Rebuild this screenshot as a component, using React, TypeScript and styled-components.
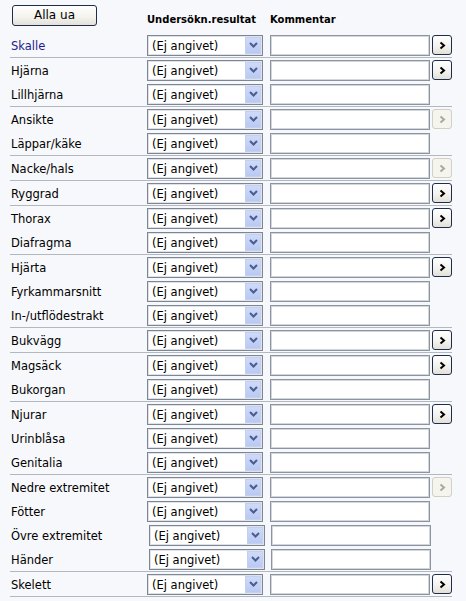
import React from 'react';
import styled, { createGlobalStyle } from 'styled-components';

type Row = {
  label: string;
  go?: 'on' | 'off';
  sep?: boolean;
  shift?: boolean;
  active?: boolean;
};

const rows: Row[] = [
  { label: 'Skalle', go: 'on', sep: true, active: true },
  { label: 'Hjärna', go: 'on' },
  { label: 'Lillhjärna', sep: true },
  { label: 'Ansikte', go: 'off' },
  { label: 'Läppar/käke', sep: true },
  { label: 'Nacke/hals', go: 'off', sep: true },
  { label: 'Ryggrad', go: 'on', sep: true },
  { label: 'Thorax', go: 'on' },
  { label: 'Diafragma', sep: true },
  { label: 'Hjärta', go: 'on' },
  { label: 'Fyrkammarsnitt' },
  { label: 'In-/utflödestrakt', sep: true },
  { label: 'Bukvägg', go: 'on', sep: true },
  { label: 'Magsäck', go: 'on' },
  { label: 'Bukorgan', sep: true },
  { label: 'Njurar', go: 'on' },
  { label: 'Urinblåsa' },
  { label: 'Genitalia', sep: true },
  { label: 'Nedre extremitet', go: 'off' },
  { label: 'Fötter' },
  { label: 'Övre extremitet', shift: true },
  { label: 'Händer', shift: true, sep: true },
  { label: 'Skelett', go: 'on', sep: true },
];

const Chevron = ({ color }: { color: string }) => (
  <svg width="7" height="9" viewBox="0 0 7 9">
    <path d="M1.5 1.5 L5 4.5 L1.5 7.5" fill="none" stroke={color} strokeWidth="2" />
  </svg>
);

const Down = () => (
  <svg width="9" height="6" viewBox="0 0 9 6">
    <path d="M1 1 L4.5 4.5 L8 1" fill="none" stroke="#4b5d8b" strokeWidth="2" />
  </svg>
);

export default function App() {
  return (
    <>
      <Global />
      <Page>
        <Header>
          <AllButton type="button">Alla ua</AllButton>
          <ColTitle>Undersökn.resultat</ColTitle>
          <ColTitle>Kommentar</ColTitle>
        </Header>
        {rows.map((r) => (
          <Line key={r.label} $sep={r.sep}>
            <Label $active={r.active}>{r.label}</Label>
            <SelectWrap $shift={r.shift}>
              <Select defaultValue="none">
                <option value="none">(Ej angivet)</option>
              </Select>
              <Arrow>
                <Down />
              </Arrow>
            </SelectWrap>
            <Comment type="text" $shift={r.shift} />
            {r.go && (
              <GoButton type="button" $off={r.go === 'off'}>
                <Chevron color={r.go === 'off' ? '#aca899' : '#000'} />
              </GoButton>
            )}
          </Line>
        ))}
      </Page>
    </>
  );
}

const Global = createGlobalStyle`
  body {
    margin: 0;
    background: #f7f8fb;
    font-family: "DejaVu Sans", Verdana, sans-serif;
  }
`;

const Page = styled.div`
  width: 466px;
  padding: 0 0 0 10px;
`;

const Header = styled.div`
  display: grid;
  grid-template-columns: 137px 123px 182px;
  height: 33px;
  align-items: start;
`;

const AllButton = styled.button`
  margin: 5px 0 0 2px;
  width: 85px;
  height: 21px;
  padding: 0 0 2px;
  border: 1px solid #1f2d4d;
  border-radius: 3px;
  background: linear-gradient(#ffffff, #f3f2ec 60%, #e3e1d8);
  font-family: "DejaVu Sans", Verdana, sans-serif;
  font-size: 12px;
  color: #000;
`;

const ColTitle = styled.div`
  margin-top: 14px;
  font-size: 10px;
  font-weight: bold;
  color: #000;
`;

const Line = styled.div<{ $sep?: boolean }>`
  display: flex;
  align-items: center;
  width: 442px;
  height: 24px;
  border-bottom: ${(p) => (p.$sep ? '1px solid #b3b7bf' : 'none')};
`;

const Label = styled.div<{ $active?: boolean }>`
  width: 136px;
  padding: 1px 0 0 1px;
  font-size: 11.5px;
  color: ${(p) => (p.$active ? '#1c1c8c' : '#000')};
`;

const SelectWrap = styled.div<{ $shift?: boolean }>`
  position: relative;
  width: 116px;
  height: 21px;
  margin-left: ${(p) => (p.$shift ? '2px' : '0')};
`;

const Select = styled.select`
  appearance: none;
  box-sizing: border-box;
  width: 100%;
  height: 100%;
  margin: 0;
  padding: 0 0 0 4px;
  border: 1px solid #7d8694;
  box-shadow: inset 0 0 0 1px #dfe2e6;
  border-radius: 0;
  background: #fff;
  font-family: "DejaVu Sans", Verdana, sans-serif;
  font-size: 11.5px;
  color: #000;
  outline: none;
`;

const Arrow = styled.span`
  position: absolute;
  top: 2px;
  right: 2px;
  bottom: 2px;
  width: 16px;
  display: flex;
  align-items: center;
  justify-content: center;
  background: linear-gradient(#cfdafa, #b9c9f3);
  border: 1px solid #c3d0f0;
  box-sizing: border-box;
  pointer-events: none;
`;

const Comment = styled.input<{ $shift?: boolean }>`
  box-sizing: border-box;
  width: 160px;
  height: 21px;
  margin: 0 0 0 ${(p) => (p.$shift ? '6px' : '7px')};
  padding: 0 3px;
  border: 1px solid #8b94a1;
  box-shadow: inset 0 0 0 1px #d3d7dc;
  background: #fff;
  outline: none;
`;

const GoButton = styled.button<{ $off?: boolean }>`
  box-sizing: border-box;
  width: 20px;
  height: 20px;
  margin-left: 2px;
  padding: 0;
  display: flex;
  align-items: center;
  justify-content: center;
  border: 1px solid ${(p) => (p.$off ? '#d2cfc3' : '#1f2d4d')};
  border-radius: 3px;
  background: ${(p) =>
    p.$off ? '#f5f4ef' : 'linear-gradient(#ffffff, #f2f1ec 60%, #e2e0d7)'};
`;
